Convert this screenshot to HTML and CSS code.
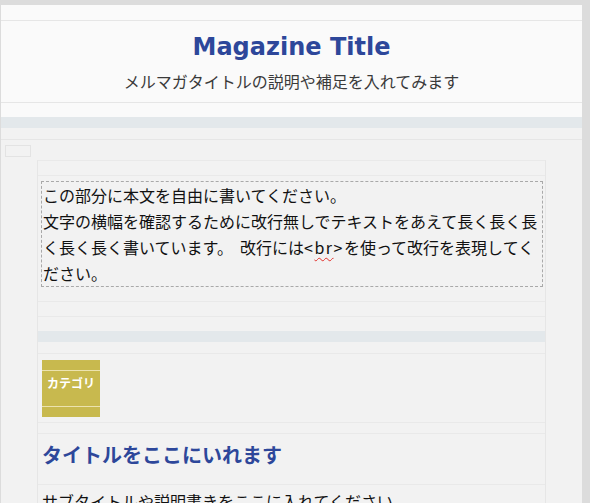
FILE: index.html
```html
<!DOCTYPE html>
<html lang="ja">
<head>
<meta charset="utf-8">
<link rel="stylesheet" href="styles.css">
</head>
<body>
<div class="page">
  <header class="header">
    <div class="header-inner">
      <h1 class="mag-title">Magazine Title</h1>
      <p class="mag-sub">メルマガタイトルの説明や補足を入れてみます</p>
    </div>
    <div class="header-gap"></div>
  </header>
  <div class="band"></div>
  <div class="row-line"></div>
  <div class="mini-box"></div>
  <div class="container">
    <div class="empty-row"></div>
    <div class="body-wrap">
      <div class="body-box">この部分に本文を自由に書いてください。<br>文字の横幅を確認するために改行無しでテキストをあえて長く長く長く長く長く書いています。<span class="latin"> </span>改行には<span class="latin">&lt;<span class="spell">br</span>&gt;</span>を使って改行を表現してください。</div>
    </div>
    <div class="empty-row"></div>
    <div class="band-row"><div class="band-inner"></div></div>
    <div class="badge-row">
      <div class="badge"><span class="badge-line"></span><span class="badge-text">カテゴリ</span><span class="badge-line"></span></div>
    </div>
    <div class="empty-row short"></div>
    <div class="title-row"><h2 class="art-title">タイトルをここにいれます</h2></div>
    <div class="sub-row">サブタイトルや説明書きをここに入れてください</div>
  </div>
</div>
</body>
</html>
```
FILE: styles.css
```css
html, body {
  margin: 0;
  padding: 0;
}
body {
  background: #dcdcdc;
  padding: 5px 8px 0 1px;
  font-family: "Noto Sans CJK JP", "Noto Sans", sans-serif;
  height: 503px;
  box-sizing: border-box;
  overflow: hidden;
}
.page {
  background: #f2f2f2;
  height: 100%;
}
.header {
  background: #fafafa;
  padding-top: 15px;
}
.header-inner {
  border-top: 1px solid #e6e6e6;
  border-bottom: 1px solid #e6e6e6;
  height: 81px;
  text-align: center;
}
.mag-title {
  margin: 0;
  padding-top: 11px;
  font-family: "DejaVu Sans", Verdana, sans-serif;
  font-weight: bold;
  font-size: 24px;
  line-height: 30px;
  color: #2d479a;
}
.mag-sub {
  margin: 0;
  padding-top: 7px;
  font-size: 16px;
  line-height: 24px;
  color: #3a3a3a;
}
.header-gap {
  height: 14px;
}
.band {
  height: 11px;
  background: #e3e8eb;
}
.row-line {
  height: 11px;
  border-bottom: 1px solid #e6e6e6;
}
.mini-box {
  margin: 5px 0 0 4px;
  width: 24px;
  height: 10px;
  border: 1px solid #e3e3e3;
}
.container {
  margin: 3px 0 0 36px;
  width: 509px;
  box-sizing: border-box;
  border-left: 1px solid #e6e6e6;
  border-right: 1px solid #e6e6e6;
  border-top: 1px solid #e9e9e9;
}
.empty-row {
  height: 14px;
  border-bottom: 1px solid #e9e9e9;
}
.empty-row.short {
  height: 10px;
}
.body-wrap {
  padding: 5px 2px 14px 3px;
  border-bottom: 1px solid #e9e9e9;
}
.body-box {
  border: 1px dashed #a9a9a9;
  padding: 0 0 0 1px;
  font-size: 16px;
  line-height: 26px;
  color: #111;
}
.latin {
  letter-spacing: 1.5px;
  word-spacing: 2px;
}
.spell {
  text-decoration: underline wavy #e0312d;
  text-decoration-thickness: 1px;
  text-underline-offset: 3px;
}
.band-row {
  padding-top: 14px;
  padding-bottom: 11px;
  border-bottom: 1px solid #e9e9e9;
}
.band-inner {
  height: 11px;
  background: #e3e8eb;
}
.badge-row {
  padding: 6px 0 5px 4px;
  border-bottom: 1px solid #e9e9e9;
}
.badge {
  width: 58px;
  height: 57px;
  background: #c8b94e;
  display: flex;
  flex-direction: column;
  box-sizing: border-box;
  padding-top: 10px;
}
.badge-line {
  display: block;
  height: 1px;
  background: #ece3ae;
}
.badge-text {
  display: block;
  margin: 4px 0 15px;
  color: #fff;
  font-weight: bold;
  font-size: 12px;
  line-height: 16px;
  text-align: center;
}
.title-row {
  height: 50px;
  border-bottom: 1px solid #e9e9e9;
  padding-left: 4px;
}
.art-title {
  margin: 0;
  padding-top: 7px;
  font-size: 20px;
  line-height: 28px;
  font-weight: bold;
  color: #2d479a;
}
.sub-row {
  padding: 3px 0 0 4px;
  font-size: 16px;
  line-height: 26px;
  color: #111;
}
```
